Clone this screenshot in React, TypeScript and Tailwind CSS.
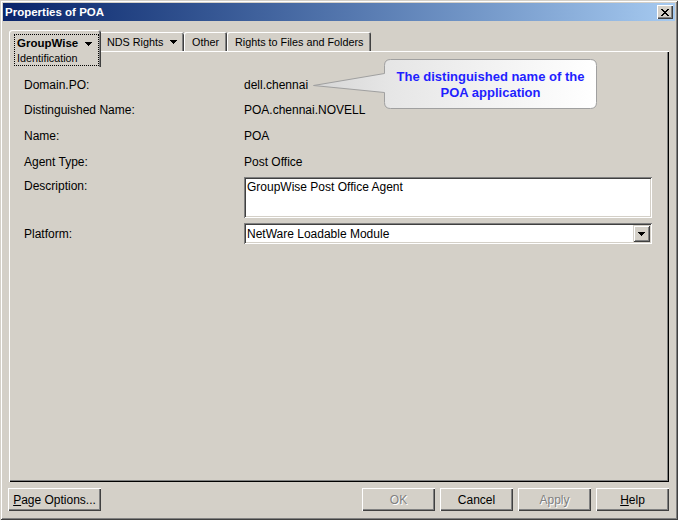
import React from "react";

function Tri() {
  return (
    <svg width="7" height="4" viewBox="0 0 7 4" shapeRendering="crispEdges">
      <rect x="0" y="0" width="7" height="1" fill="#000" />
      <rect x="1" y="1" width="5" height="1" fill="#000" />
      <rect x="2" y="2" width="3" height="1" fill="#000" />
      <rect x="3" y="3" width="1" height="1" fill="#000" />
    </svg>
  );
}

function Btn({ children, w, disabled }: { children: React.ReactNode; w: string; disabled?: boolean }) {
  return (
    <div
      className={`flex h-[23px] items-center justify-center bg-[#d4d0c8] text-[12px] shadow-[inset_1px_1px_0_#fff,inset_-1px_-1px_0_#404040,inset_-2px_-2px_0_#808080] ${w} ${
        disabled ? "text-[#808080] [text-shadow:1px_1px_0_#fff]" : "text-black"
      }`}
    >
      {children}
    </div>
  );
}

export default function App() {
  return (
    <div className="flex h-[520px] w-[678px] flex-col bg-[#d4d0c8] p-[3px] font-['Liberation_Sans',Arial,sans-serif] text-black shadow-[inset_1px_1px_0_#d4d0c8,inset_-1px_-1px_0_#404040,inset_2px_2px_0_#fff,inset_-2px_-2px_0_#808080]">
      {/* Title bar */}
      <div className="flex h-[18px] items-center justify-between bg-linear-to-r from-[#0a246a] to-[#a6caf0] pl-[2px] pr-[2px]">
        <span className="pt-[1px] text-[11.5px] font-bold leading-none text-white">Properties of POA</span>
        <div className="flex h-[14px] w-[16px] items-center justify-center bg-[#d4d0c8] shadow-[inset_1px_1px_0_#fff,inset_-1px_-1px_0_#404040,inset_-2px_-2px_0_#808080]">
          <svg width="8" height="7" viewBox="0 0 8 7" shapeRendering="crispEdges">
            <path d="M0 0h2v1h1v1h2v-1h1v-1h2v1h-1v1h-1v1h-1v1h1v1h1v1h1v1h-2v-1h-1v-1h-2v1h-1v1h-2v-1h1v-1h1v-1h1v-1h-1v-1h-1v-1h-1z" fill="#000" />
          </svg>
        </div>
      </div>

      {/* Content */}
      <div className="flex flex-1 flex-col px-[6px] pt-[9px]">
        {/* Tabs */}
        <div className="flex h-[21px] items-start">
          <div className="relative z-10 h-[37px] w-[92px] rounded-t-[3px] bg-[#d4d0c8] pl-[5px] pr-[2px] pt-[4px] shadow-[inset_1px_1px_0_#fff,inset_-1px_0_0_#404040,inset_-2px_0_0_#808080]">
            <div className="h-[32px] border border-dotted border-black pl-[2px]">
              <div className="flex h-[16px] items-center pt-[1px]">
                <span className="text-[11.5px] font-bold leading-none">GroupWise</span>
                <span className="ml-[7px] flex">
                  <Tri />
                </span>
              </div>
              <div className="flex h-[14px] items-center pt-[1px] text-[10.8px] leading-none">Identification</div>
            </div>
          </div>
          <div className="mt-[2px] flex h-[19px] w-[83px] items-center rounded-tr-[2px] pl-[6px] pt-[1px] text-[10.8px] shadow-[inset_0_1px_0_#fff,inset_-1px_0_0_#404040,inset_-2px_0_0_#808080]">
            <span>NDS Rights</span>
            <span className="ml-[7px] flex">
              <Tri />
            </span>
          </div>
          <div className="mt-[2px] flex h-[19px] w-[43px] items-center rounded-t-[2px] pl-[8px] pt-[1px] text-[10.8px] shadow-[inset_1px_1px_0_#fff,inset_-1px_0_0_#404040,inset_-2px_0_0_#808080]">
            Other
          </div>
          <div className="mt-[2px] flex h-[19px] w-[144px] items-center rounded-t-[2px] pl-[8px] pt-[1px] text-[10.8px] shadow-[inset_1px_1px_0_#fff,inset_-1px_0_0_#404040,inset_-2px_0_0_#808080]">
            Rights to Files and Folders
          </div>
        </div>

        {/* Panel */}
        <div className="relative h-[431px] bg-[#d4d0c8] pl-[15px] pr-[17px] pt-[21px] text-[12px] shadow-[inset_1px_1px_0_#fff,inset_-1px_-1px_0_#000,inset_-2px_-2px_0_#808080]">
          <div className="flex h-[25px] items-center">
            <div className="w-[220px]">Domain.PO:</div>
            <div>dell.chennai</div>
          </div>
          <div className="flex h-[26px] items-center">
            <div className="w-[220px]">Distinguished Name:</div>
            <div>POA.chennai.NOVELL</div>
          </div>
          <div className="flex h-[26px] items-center">
            <div className="w-[220px]">Name:</div>
            <div>POA</div>
          </div>
          <div className="flex h-[26px] items-center">
            <div className="w-[220px]">Agent Type:</div>
            <div>Post Office</div>
          </div>
          <div className="mt-[2px] flex">
            <div className="w-[220px] pt-[2px] leading-[14px]">Description:</div>
            <div className="h-[41px] flex-1 bg-white pl-[3px] pt-[3px] leading-[14px] shadow-[inset_1px_1px_0_#808080,inset_-1px_-1px_0_#fff,inset_2px_2px_0_#404040,inset_-2px_-2px_0_#d4d0c8]">
              GroupWise Post Office Agent
            </div>
          </div>
          <div className="mt-[5px] flex items-center">
            <div className="w-[220px]">Platform:</div>
            <div className="flex h-[21px] flex-1 items-center justify-between bg-white pl-[3px] pr-[2px] shadow-[inset_1px_1px_0_#808080,inset_-1px_-1px_0_#fff,inset_2px_2px_0_#404040,inset_-2px_-2px_0_#d4d0c8]">
              <span>NetWare Loadable Module</span>
              <div className="flex h-[17px] w-[17px] items-center justify-center bg-[#d4d0c8] shadow-[inset_1px_1px_0_#d4d0c8,inset_-1px_-1px_0_#404040,inset_2px_2px_0_#fff,inset_-2px_-2px_0_#808080]">
                <Tri />
              </div>
            </div>
          </div>

          {/* Callout */}
          <svg className="absolute left-[301px] top-[6px]" width="290" height="54" viewBox="0 0 290 54">
            <defs>
              <linearGradient id="cg" x1="0" y1="0" x2="1" y2="0">
                <stop offset="0" stopColor="#d6d6d6" />
                <stop offset="0.27" stopColor="#e6e6e6" />
                <stop offset="1" stopColor="#ffffff" />
              </linearGradient>
            </defs>
            <path
              d="M80.5 2.5 H280.5 Q286.5 2.5 286.5 8.5 V45.5 Q286.5 51.5 280.5 51.5 H80.5 Q74.5 51.5 74.5 45.5 V35.5 L3.5 28.5 L74.5 16.5 V8.5 Q74.5 2.5 80.5 2.5 Z"
              fill="url(#cg)"
              stroke="#a0a0a0"
              strokeWidth="1"
            />
          </svg>
          <div className="absolute left-[375px] top-[8px] flex h-[50px] w-[213px] flex-col items-center pt-[10px] text-[13px] font-bold leading-[16px] text-[#1f1fff]">
            <span>The distinguished name of the</span>
            <span>POA application</span>
          </div>
        </div>

        {/* Buttons */}
        <div className="mt-[6px] flex items-center">
          <div className="-ml-[1px]">
            <Btn w="w-[93px]">
              <span>
                <span className="underline">P</span>age Options...
              </span>
            </Btn>
          </div>
          <div className="flex-1" />
          <div className="flex gap-[5px]">
            <Btn w="w-[73px]" disabled>
              OK
            </Btn>
            <Btn w="w-[73px]">Cancel</Btn>
            <Btn w="w-[73px]" disabled>
              Apply
            </Btn>
            <Btn w="w-[73px]">
              <span>
                <span className="underline">H</span>elp
              </span>
            </Btn>
          </div>
        </div>
      </div>
    </div>
  );
}
